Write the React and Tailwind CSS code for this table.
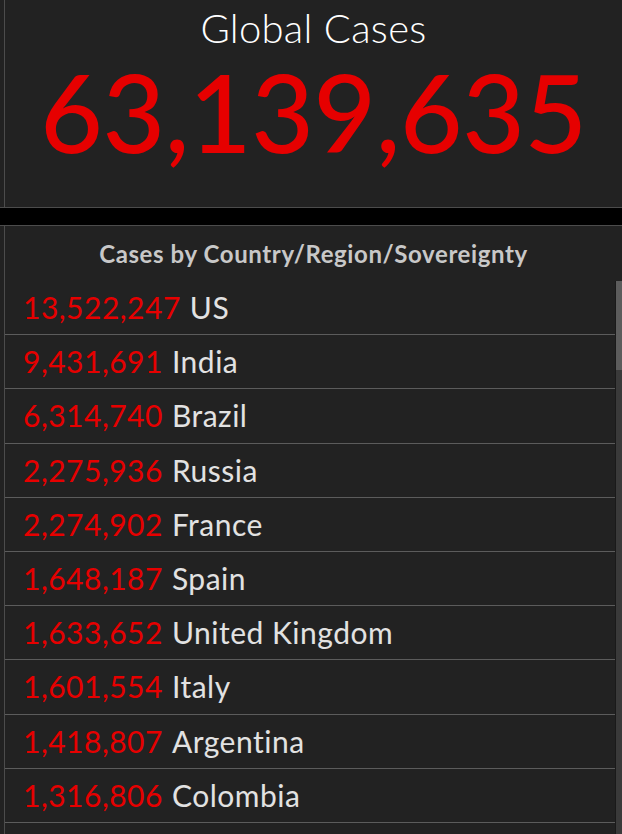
import React from 'react'

const rows = [
  ['13,522,247', 'US'],
  ['9,431,691', 'India'],
  ['6,314,740', 'Brazil'],
  ['2,275,936', 'Russia'],
  ['2,274,902', 'France'],
  ['1,648,187', 'Spain'],
  ['1,633,652', 'United Kingdom'],
  ['1,601,554', 'Italy'],
  ['1,418,807', 'Argentina'],
  ['1,316,806', 'Colombia'],
]

export default function App() {
  return (
    <div className="w-[622px] h-[834px] overflow-hidden bg-black font-['Lato',sans-serif]">
      {/* global total */}
      <div className="h-[208px] bg-[#222222] border-b border-[#4c4c4c] pl-[4px]">
        <div className="h-full border-l border-[#4c4c4c] flex flex-col items-center">
          <h1 className="mt-[3px] text-[40px] leading-[50px] text-white font-light tracking-[0.3px]">Global Cases</h1>
          <div className="mt-[4px] text-[108px] leading-[108px] text-[#e60000] font-medium tracking-[-0.4px]">63,139,635</div>
        </div>
      </div>

      {/* country list */}
      <div className="mt-[17px] h-[609px] bg-[#222222] border-t border-[#4c4c4c] pl-[4px]">
        <div className="h-full border-l border-[#4c4c4c] flex flex-col">
          <div className="h-[55px] flex items-center justify-center text-[24px] font-bold text-[#c8c8c8] tracking-[0.6px]">
            Cases by Country/Region/Sovereignty
          </div>
          <div className="flex-1 flex overflow-hidden">
            <ul className="flex-1">
              {rows.map(([n, c]) => (
                <li key={c} className="h-[54.2px] border-b border-[#5c5c5c] flex items-center pl-[18px] text-[30px] tracking-[0.5px]">
                  <span className="text-[#e60000]">{n}</span>
                  <span className="ml-[9px] text-[#e2e2e2]">{c}</span>
                </li>
              ))}
            </ul>
            <div className="w-[7px] bg-[#3a3a3a] border-l border-[#1a1a1a]">
              <div className="h-[89px] bg-[#5c5c5c]" />
            </div>
          </div>
        </div>
      </div>
    </div>
  )
}
